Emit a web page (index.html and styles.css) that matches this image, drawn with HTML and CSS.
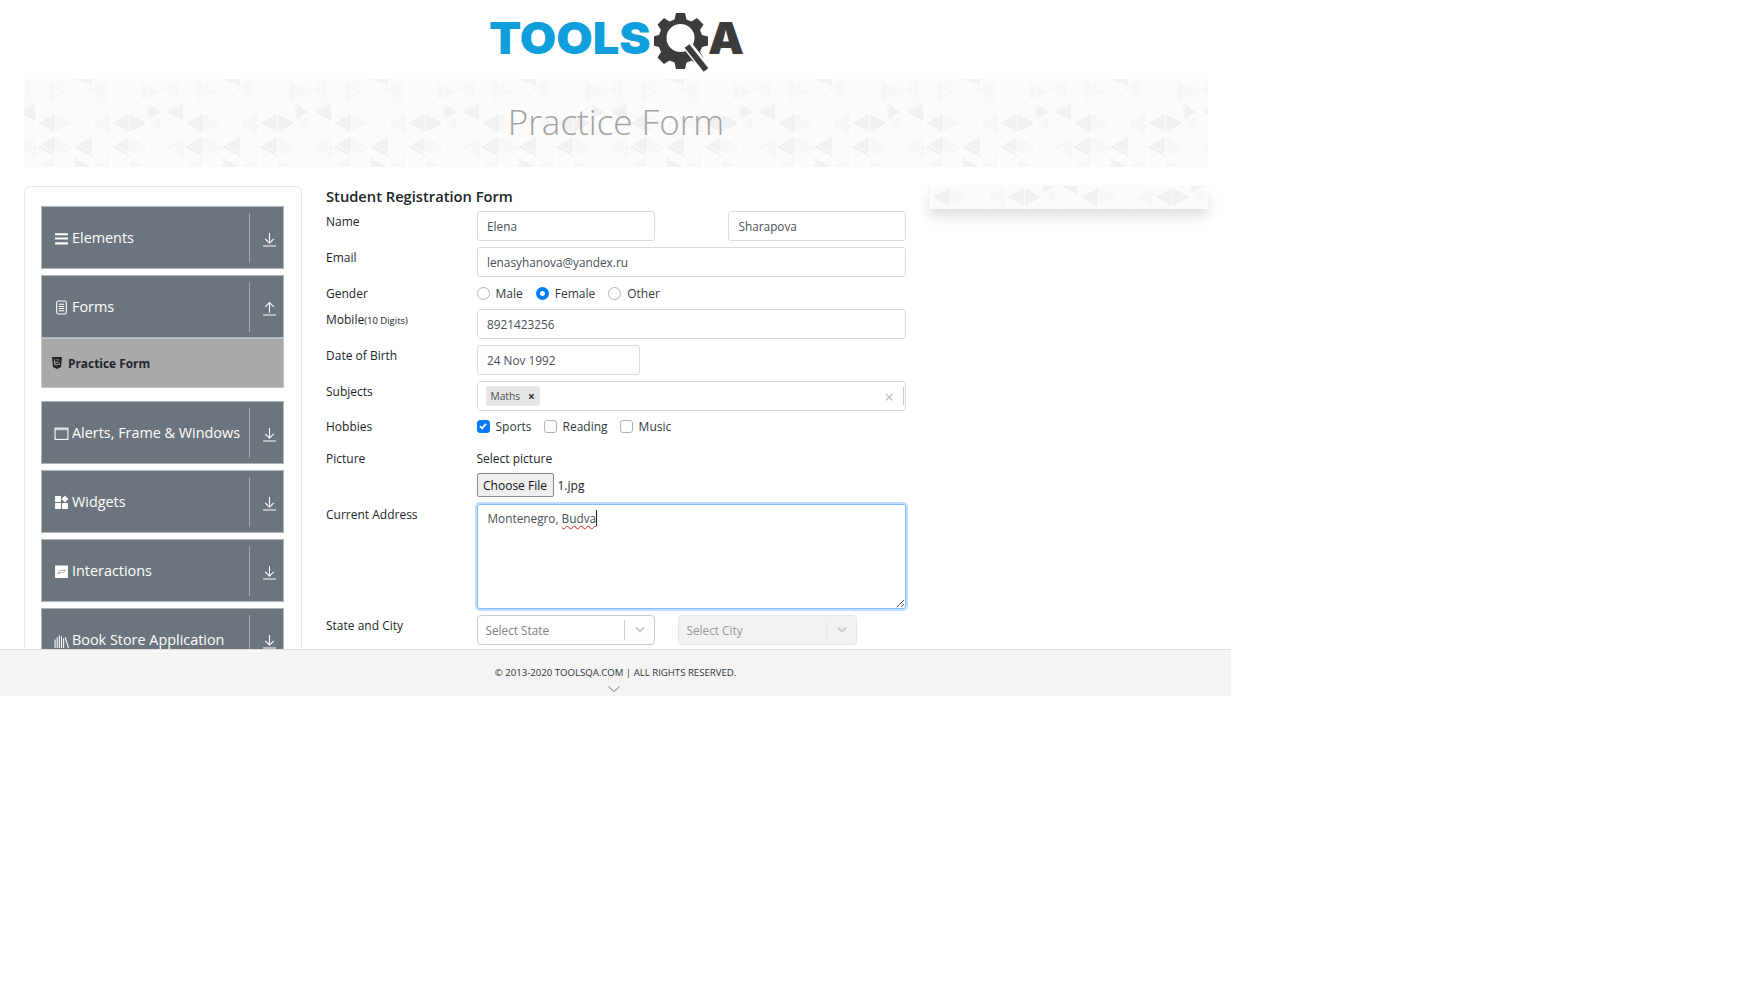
FILE: index.html
```html
<!DOCTYPE html>
<html lang="en">
<head>
    <meta charset="UTF-8">
    <meta name="viewport" content="width=device-width, initial-scale=1.0">
    <title>Practice Form</title>
    <link rel="stylesheet" href="styles.css">
</head>
<body>
    <div class="page">
        <header class="logo-row">
            <div class="logo">
                <span class="logo-tools">TOOLS</span>
                <svg class="logo-gear" viewBox="0 0 54 60" width="54" height="60">
                    <path fill="#3c3c3c" fill-rule="evenodd" d="M22 1h9l1.500 6.500 5 2 5.500-3.500 6.500 6.500-3.500 5.500 2 5 6.500 1.500v9l-6.500 1.500-2 5 3.500 5.500-6.500 6.500-5.500-3.500-5 2-1.500 6.500h-9l-1.500-6.500-5-2-5.500 3.500-6.500-6.500 3.500-5.500-2-5-6.500-1.500v-9l6.500-1.500 2-5-3.500-5.500 6.500-6.500 5.500 3.500 5-2zM26.500 12a14 14 0 1 0 0 28 14 14 0 0 0 0-28z"/>
                    <path fill="none" stroke="#fff" stroke-width="10" d="M33 33l19 24"/>
                    <path fill="none" stroke="#3c3c3c" stroke-width="6" d="M33 34l19 24"/>
                </svg>
                <span class="logo-a">A</span>
            </div>
        </header>

        <div class="banner">
            <svg class="tri-bg" width="100%" height="100%">
                <defs>
                    <pattern id="tri" patternUnits="userSpaceOnUse" x="136" y="0" width="148" height="88">
                        <rect width="148" height="88" fill="#fbfbfb"/>
                        <g fill="#f7f7f7">
                            <path d="M0 12l18.500-10v20zM37 2l18.500 10-18.500 10zM74 12l18.500-10v20zM129.500 2l18.500 10-18.500 10z"/>
                            <path d="M43 34.500l18.500 9.500-18.500 10zM80 44l18.500-9.500v20zM135 44l13-7v14z"/>
                            <path d="M6 68l18.500-10v20zM43 58l18.500 10-18.500 10zM117 58l18.500 10-18.500 10z"/>
                            <path d="M25 88l18-10v10zM98 78v10h-16zM117 80l16 8h-16z"/>
                        </g>
                        <g fill="#f1f1f1">
                            <path d="M25 44l18-9.500v20zM100 44l17-9.500v20zM117 34.500l18 9.500-18 10z"/>
                            <path d="M25 68l18-10v20zM62 68l18-10v20zM100 68l17-10v20zM62 78l16 10h-16z"/>
                            <path d="M5 33l18-9v17zM135 24l13 9-13 8zM62 0h18v6z"/>
                        </g>
                        <g stroke="#fff" stroke-width="1" opacity="0.8" fill="none">
                            <path d="M6.500 0v88M25 0v88M43.500 0v88M62 0v88M80.500 0v88M99 0v88M117.500 0v88M136 0v88"/>
                            <path d="M0 -89.500l148 80M0 -69.500l148 80M0 -49.500l148 80M0 -29.500l148 80M0 -9.500l148 80M0 10.500l148 80M0 30.500l148 80M0 50.500l148 80M0 70.500l148 80"/>
                            <path d="M0 17.500l148-80M0 37.500l148-80M0 57.500l148-80M0 77.500l148-80M0 97.500l148-80M0 117.500l148-80M0 137.500l148-80M0 157.500l148-80"/>
                        </g>
                    </pattern>
                    <pattern id="tri-ad" href="#tri" x="-22" y="-33"/>
                </defs>
                <rect width="100%" height="100%" fill="url(#tri)"/>
            </svg>
            <h1>Practice Form</h1>
        </div>

        <main class="content">
            <aside class="side-card">
                <div class="side-item">
                    <div class="side-label">
                        <svg class="side-icon" viewBox="0 0 14 14"><path fill="#fff" d="M1 2h12v2H1zM1 6h12v2H1zM1 10.500h12v2H1z"/></svg>
                        Elements
                    </div>
                    <svg class="side-arrow" viewBox="0 0 12 14"><path fill="none" stroke="#fff" d="M6 1v9M2 6.500l4 4 4-4M0 13h12"/></svg>
                </div>
                <div class="side-item side-item-open">
                    <div class="side-label">
                        <svg class="side-icon" viewBox="0 0 14 14"><rect x="2.500" y="1" width="9" height="12" rx="1.500" fill="none" stroke="#fff"/><path stroke="#fff" d="M4.500 4h5M4.500 6h5M4.500 8h5M4.500 10h5"/></svg>
                        Forms
                    </div>
                    <svg class="side-arrow" viewBox="0 0 12 14"><path fill="none" stroke="#fff" d="M6 11V2M2 5.500l4-4 4 4M0 13h12"/></svg>
                </div>
                <div class="side-sub">
                    <svg class="sub-icon" viewBox="0 0 10 12"><path fill="#212529" fill-rule="evenodd" d="M0 0h10l-1 10-4 2-4-2zM2.500 2.500l.3 2.200h3.900l-.1 1H3l.1 1.100 1.900.6 1.700-.5.100-.9h1l-.2 1.700-2.700.8-2.700-.8-.4-5.200h5.500l-.1 1z"/></svg>
                    Practice Form
                </div>
                <div class="side-item">
                    <div class="side-label">
                        <svg class="side-icon" viewBox="0 0 14 14"><rect x="1" y="2" width="12" height="10.500" fill="none" stroke="#fff"/><path fill="#fff" d="M1 2h12v2H1z" opacity="0.6"/></svg>
                        Alerts, Frame &amp; Windows
                    </div>
                    <svg class="side-arrow" viewBox="0 0 12 14"><path fill="none" stroke="#fff" d="M6 1v9M2 6.500l4 4 4-4M0 13h12"/></svg>
                </div>
                <div class="side-item">
                    <div class="side-label">
                        <svg class="side-icon" viewBox="0 0 14 14"><path fill="#fff" d="M1 1h5.500v5.500H1zM1 7.500h5.500V13H1zM7.500 7.500H13V13H7.500zM10.200 .5l3.300 3.300-3.300 3.200-3.200-3.200z"/></svg>
                        Widgets
                    </div>
                    <svg class="side-arrow" viewBox="0 0 12 14"><path fill="none" stroke="#fff" d="M6 1v9M2 6.500l4 4 4-4M0 13h12"/></svg>
                </div>
                <div class="side-item">
                    <div class="side-label">
                        <svg class="side-icon" viewBox="0 0 14 14"><path fill="#fff" fill-rule="evenodd" d="M1 1.500h12v11.500H1zM4 6h5V4.800L11 6.500H4zM10 8.500H5V9.700L3 8h7z"/></svg>
                        Interactions
                    </div>
                    <svg class="side-arrow" viewBox="0 0 12 14"><path fill="none" stroke="#fff" d="M6 1v9M2 6.500l4 4 4-4M0 13h12"/></svg>
                </div>
                <div class="side-item">
                    <div class="side-label">
                        <svg class="side-icon" viewBox="0 0 14 14"><path fill="none" stroke="#fff" d="M1 6v8M3 4v10M5 2v12M7 3v11M9 5v9M10.500 4l3 10"/></svg>
                        Book Store Application
                    </div>
                    <svg class="side-arrow" viewBox="0 0 12 14"><path fill="none" stroke="#fff" d="M6 1v9M2 6.500l4 4 4-4M0 13h12"/></svg>
                </div>
            </aside>

            <form class="reg-form">
                <h5>Student Registration Form</h5>
                <div class="rows">
                    <div class="row">
                        <label class="row-label">Name</label>
                        <div class="row-body name-pair">
                            <input class="field" type="text" value="Elena">
                            <input class="field" type="text" value="Sharapova">
                        </div>
                    </div>
                    <div class="row">
                        <label class="row-label">Email</label>
                        <div class="row-body"><input class="field" type="text" value="lenasyhanova@yandex.ru"></div>
                    </div>
                    <div class="row row-short">
                        <label class="row-label">Gender</label>
                        <div class="row-body options">
                            <span class="opt"><i class="radio"></i>Male</span>
                            <span class="opt"><i class="radio radio-on"></i>Female</span>
                            <span class="opt"><i class="radio"></i>Other</span>
                        </div>
                    </div>
                    <div class="row">
                        <label class="row-label">Mobile<small>(10 Digits)</small></label>
                        <div class="row-body"><input class="field" type="text" value="8921423256"></div>
                    </div>
                    <div class="row">
                        <label class="row-label">Date of Birth</label>
                        <div class="row-body"><input class="field field-date" type="text" value="24 Nov 1992"></div>
                    </div>
                    <div class="row">
                        <label class="row-label">Subjects</label>
                        <div class="row-body">
                            <div class="field subjects">
                                <span class="chip">Maths<b>×</b></span>
                                <span class="clear">×</span>
                                <span class="subjects-sep"></span>
                            </div>
                        </div>
                    </div>
                    <div class="row row-short row-tight">
                        <label class="row-label">Hobbies</label>
                        <div class="row-body options options-check">
                            <span class="opt"><i class="check check-on"><svg viewBox="0 0 12 12" width="12" height="12"><path fill="none" stroke="#fff" stroke-width="1.800" d="M3 6.200l2.200 2.200L9 3.800"/></svg></i>Sports</span>
                            <span class="opt"><i class="check"></i>Reading</span>
                            <span class="opt"><i class="check"></i>Music</span>
                        </div>
                    </div>
                    <div class="row row-picture">
                        <label class="row-label">Picture</label>
                        <div class="row-body">
                            <div class="picture-label">Select picture</div>
                            <div class="file-line"><button type="button" class="file-btn">Choose File</button>1.jpg</div>
                        </div>
                    </div>
                    <div class="row">
                        <label class="row-label">Current Address</label>
                        <div class="row-body">
                            <div class="address">
                                Montenegro, <span class="misspelt">Budva</span><span class="caret"></span>
                                <svg class="grip" viewBox="0 0 8 8" width="8" height="8"><path stroke="#555" fill="none" d="M1 8l7-7M5 8l3-3"/></svg>
                            </div>
                        </div>
                    </div>
                    <div class="row">
                        <label class="row-label">State and City</label>
                        <div class="row-body selects">
                            <div class="select">
                                <span>Select State</span>
                                <i class="select-sep"></i>
                                <svg viewBox="0 0 12 8" width="12" height="8"><path fill="none" stroke="#ccc" stroke-width="2" d="M2 1.500l4 4 4-4"/></svg>
                            </div>
                            <div class="select select-off">
                                <span>Select City</span>
                                <i class="select-sep"></i>
                                <svg viewBox="0 0 12 8" width="12" height="8"><path fill="none" stroke="#ccc" stroke-width="2" d="M2 1.500l4 4 4-4"/></svg>
                            </div>
                        </div>
                    </div>
                </div>
            </form>

            <div class="ad-strip">
                <svg class="tri-bg" width="100%" height="100%"><rect width="100%" height="100%" fill="url(#tri-ad)"/></svg>
            </div>
        </main>

        <footer class="foot">
            <span>© 2013-2020 TOOLSQA.COM | ALL RIGHTS RESERVED.</span>
            <svg class="foot-chevron" viewBox="0 0 12 6" width="12" height="6"><path fill="none" stroke="#777" d="M.5 .5L6 5.500 11.500 .5"/></svg>
        </footer>
    </div>
</body>
</html>
```

FILE: styles.css
```css
body {
    margin: 0;
    background-color: #fff;
    color: #212529;
    font-family: "Open Sans", "Noto Sans", sans-serif;
    font-size: 12px;
}
.page {
    width: 1231px;
}
.logo-row {
    height: 79px;
    display: flex;
    justify-content: center;
}
.logo {
    display: flex;
    align-items: flex-start;
    width: 256px;
    padding-top: 12px;
    height: 60px;
    margin-left: 2px;
}
.logo-tools {
    font-family: Inter, sans-serif;
    font-weight: 900;
    font-size: 44px;
    line-height: 1;
    margin-top: 4px;
    color: #0f9fdc;
    width: 165px;
    transform: scaleX(1.07);
    transform-origin: left center;
}
.logo-gear {
    flex: none;
}
.logo-a {
    font-family: Inter, sans-serif;
    font-weight: 900;
    font-size: 44px;
    line-height: 1;
    margin-top: 4px;
    color: #3c3c3c;
    transform: scaleX(1.03);
    transform-origin: left center;
}
.banner {
    position: relative;
    height: 88px;
    margin: 0 23px 0 24px;
    padding-bottom: 4px;
    box-sizing: border-box;
    display: flex;
    align-items: center;
    justify-content: center;
}
.tri-bg {
    position: absolute;
    left: 0;
    top: 0;
}
.banner h1 {
    position: relative;
    margin: 0;
    font-size: 35px;
    font-weight: 300;
    color: #a3a3a3;
}
.content {
    display: flex;
    align-items: flex-start;
    height: 482px;
    padding: 19px 0 0 24px;
    box-sizing: border-box;
    overflow: hidden;
}
.side-card {
    flex: none;
    width: 278px;
    height: 600px;
    box-sizing: border-box;
    padding: 19px 17px 19px 16px;
    border: 1px solid #e9e9e9;
    border-radius: 6px;
}
.side-item {
    display: flex;
    align-items: center;
    height: 63px;
    box-sizing: border-box;
    margin-bottom: 6px;
    background-color: #6c757d;
    border: 1px solid #adb5bd;
    color: #fff;
    font-size: 14.400px;
}
.side-item-open {
    margin-bottom: 0;
}
.side-label {
    flex: 1;
    display: flex;
    align-items: center;
    gap: 3px;
    height: 50px;
    padding-left: 12px;
    padding-bottom: 1px;
    box-sizing: border-box;
    border-right: 1px solid #a0a7ad;
    white-space: nowrap;
}
.side-icon {
    width: 15px;
    height: 15px;
    flex: none;
    margin-top: 2px;
}
.side-arrow {
    width: 13px;
    height: 15px;
    flex: none;
    margin: 3px 7px 0 13px;
}
.side-sub {
    display: flex;
    align-items: center;
    gap: 6px;
    height: 50px;
    box-sizing: border-box;
    margin-bottom: 13px;
    padding-left: 10px;
    background-color: #a9a9a9;
    border: 1px solid #c4c4c4;
    font-weight: 700;
    font-size: 11.900px;
}
.sub-icon {
    width: 10px;
    height: 12px;
}
.reg-form {
    flex: none;
    width: 580px;
    margin-left: 24px;
}
.reg-form h5 {
    margin: 0 0 5px;
    font-size: 14.700px;
    line-height: 20px;
    font-weight: 600;
}
.rows {
    display: flex;
    flex-direction: column;
    gap: 6px;
}
.row {
    display: flex;
    align-items: flex-start;
}
.row-label {
    flex: none;
    width: 150.500px;
    height: 20px;
    line-height: 21px;
    white-space: nowrap;
}
.row-label small {
    font-size: 9.500px;
}
.row-body {
    flex: 1;
}
.row-tight {
    margin-top: -1px;
}
.row-picture {
    margin-top: 6px;
    margin-bottom: 1px;
}
.name-pair {
    display: flex;
    justify-content: space-between;
}
.name-pair .field {
    width: 178px;
}
.field {
    display: block;
    width: 100%;
    height: 30px;
    box-sizing: border-box;
    padding: 0 9.500px;
    border: 1px solid #d8dce0;
    border-radius: 3px;
    color: #495057;
    font: inherit;
    font-size: 11.800px;
}
.field-date {
    width: 163px;
}
.options {
    display: flex;
    gap: 13px;
    height: 20px;
    align-items: center;
    color: #343a40;
}
.options-check {
    gap: 12px;
}
.opt {
    display: flex;
    align-items: center;
    gap: 6px;
    font-size: 12px;
}
.radio,
.check {
    display: block;
    width: 13px;
    height: 13px;
    box-sizing: border-box;
    border: 1px solid #adb5bd;
    background-color: #fff;
}
.radio {
    border-radius: 50%;
}
.radio-on {
    border: 4px solid #007bff;
}
.check {
    border-radius: 3px;
    line-height: 0;
}
.check-on {
    background-color: #007bff;
    border-color: #007bff;
    padding: 0;
}
.check-on svg {
    margin: -1px 0 0 -1px;
}
.subjects {
    display: flex;
    align-items: center;
    padding: 0 1px 0 8px;
}
.chip {
    display: flex;
    align-items: center;
    gap: 8px;
    height: 20px;
    padding: 0 5px;
    background-color: #e6e6e6;
    border-radius: 2px;
    font-size: 10.200px;
    color: #495057;
}
.chip b {
    color: #333;
    font-size: 12px;
}
.clear {
    margin-left: auto;
    color: #bbb;
    font-size: 17px;
    line-height: 1;
}
.subjects-sep {
    width: 1px;
    height: 18px;
    margin-left: 9px;
    background-color: #ccc;
}
.picture-label {
    line-height: 20px;
    margin-top: 1px;
    margin-bottom: 4px;
}
.file-line {
    display: flex;
    align-items: center;
    gap: 4px;
    height: 24px;
}
.file-btn {
    height: 24px;
    width: 77px;
    padding: 0;
    border: 1px solid #8a8a8a;
    border-radius: 2px;
    background-color: #efefef;
    color: #111;
    font: inherit;
}
.address {
    position: relative;
    height: 105px;
    box-sizing: border-box;
    padding: 3px 10px;
    border: 1px solid #80bdff;
    border-radius: 3px;
    box-shadow: 0 0 0 2px #bfdeff;
    color: #495057;
    line-height: 20px;
    font-size: 11.800px;
}
.misspelt {
    text-decoration: underline wavy #e02020 1px;
    text-underline-offset: 2px;
}
.caret {
    display: inline-block;
    width: 1px;
    height: 16px;
    vertical-align: -3px;
    background-color: #222;
}
.grip {
    position: absolute;
    right: 1px;
    bottom: 1px;
}
.selects {
    display: flex;
    gap: 23px;
}
.select {
    display: flex;
    align-items: center;
    width: 178px;
    height: 30px;
    box-sizing: border-box;
    padding: 0 8px;
    border: 1px solid #ccc;
    border-radius: 4px;
    color: #808080;
    font-size: 11.800px;
}
.select span {
    flex: 1;
}
.select-sep {
    width: 1px;
    height: 20px;
    margin-right: 9px;
    background-color: #ccc;
}
.select-off {
    width: 179px;
    background-color: #f2f2f2;
    border-color: #e6e6e6;
    color: #999;
}
.select-off .select-sep {
    background-color: #e6e6e6;
}
.ad-strip {
    position: relative;
    flex: none;
    width: 279px;
    height: 23px;
    margin-left: 23px;
    box-shadow: 0 8px 12px rgba(0, 0, 0, 0.12);
}
.foot {
    height: 47px;
    box-sizing: border-box;
    border-top: 1px solid #dedede;
    background-color: #f4f4f4;
    display: flex;
    flex-direction: column;
    align-items: center;
    padding-top: 16px;
    gap: 6px;
    font-size: 9.600px;
    line-height: 14px;
    color: #333;
}
.foot-chevron {
    margin-right: 4px;
}
```
